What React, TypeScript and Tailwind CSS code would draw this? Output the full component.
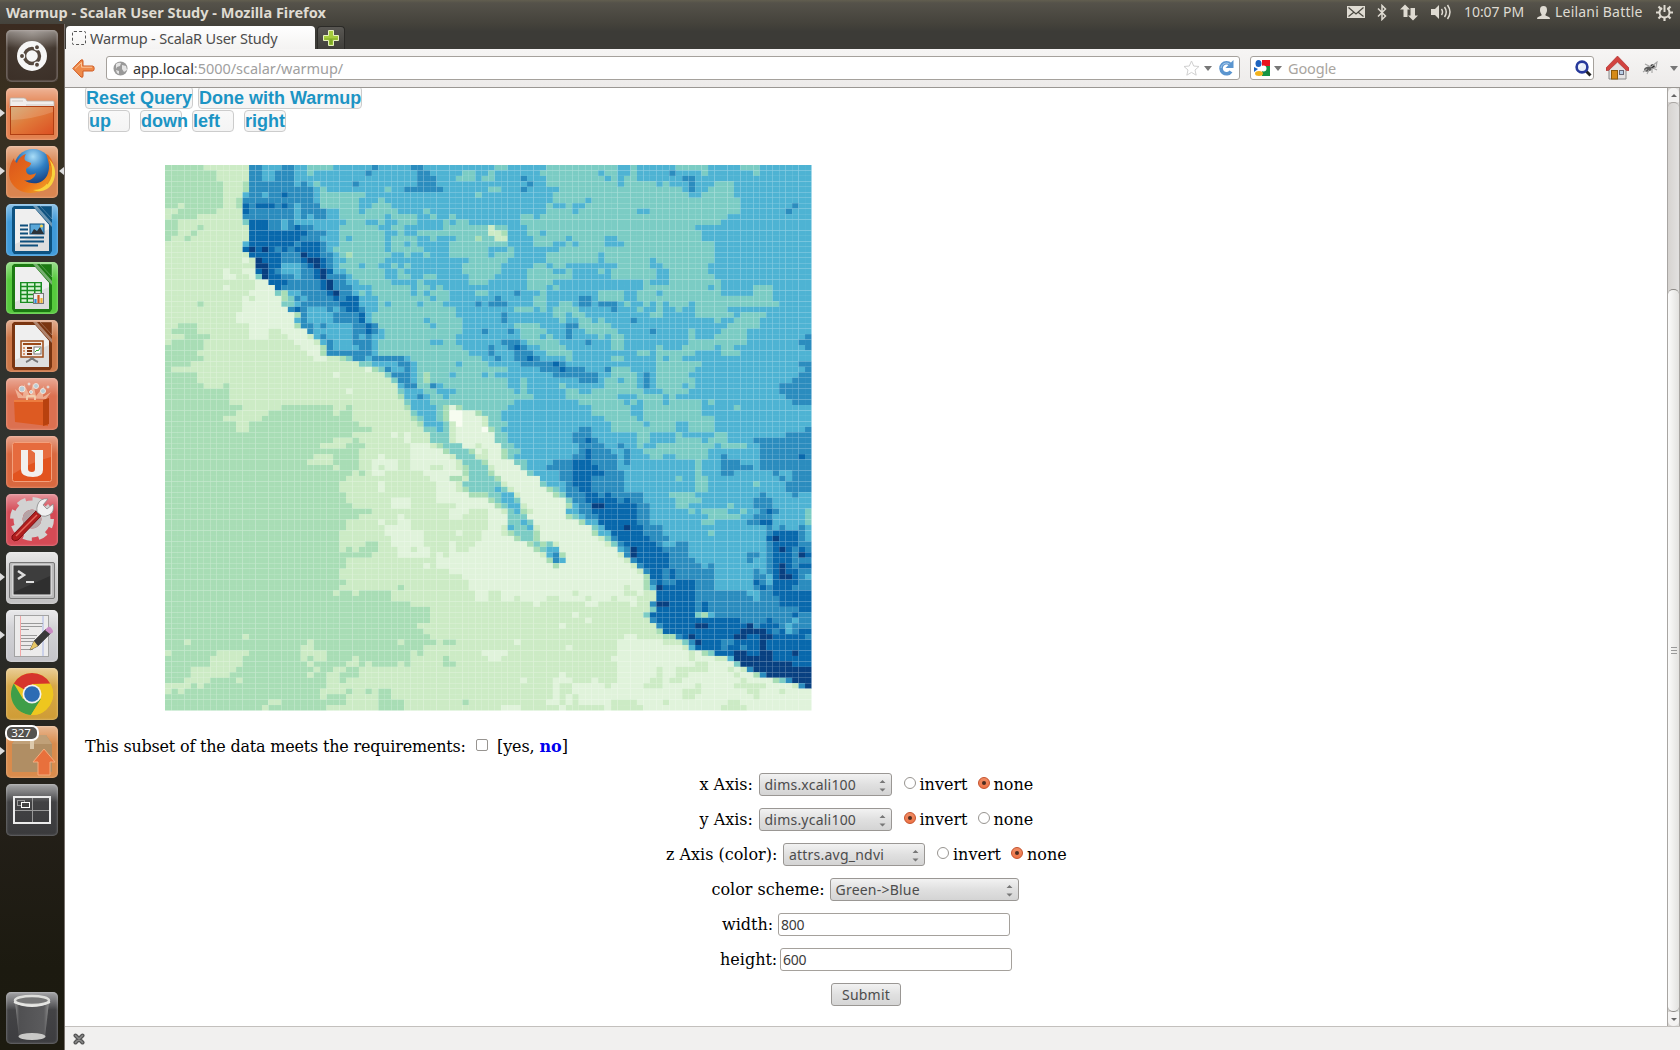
import React from "react";

const COLORS = ["#f7fcf0", "#e0f3db", "#ccebc5", "#a8ddb5", "#7bccc4", "#4eb3d3", "#2b8cbe", "#0868ac", "#084081"];

// Each token is a colour level followed by the column at which its run ends.
const ROWS = `36 213 615 518 620 522 426 532 633 538 640 551 453 559 470 572 473 579 484 589 492 5100
38 213 615 517 620 522 423 531 632 539 641 546 448 550 451 558 467 568 470 572 473 578 679 583 484 591 492 5100
38 213 615 517 620 523 539 642 545 448 549 451 555 656 559 468 569 470 571 473 580 682 5100
39 212 313 620 521 622 523 424 529 630 539 642 556 657 559 470 571 476 577 478 581 682 585 488 5100
39 212 313 623 524 425 534 435 537 643 550 452 555 656 561 480 581 682 584 488 5100
39 212 513 615 516 618 719 623 524 431 548 449 560 481 583 488 5100
39 211 312 623 524 430 533 434 560 465 566 489 5100
32 23 39 211 312 713 614 717 618 719 620 521 624 430 532 435 559 460 562 463 565 489 597 698 5100
22 38 212 713 620 521 625 527 430 531 436 540 441 559 463 564 473 575 489 596 697 5100
21 35 212 620 521 622 523 625 527 434 535 439 541 442 544 445 555 457 558 487 5100
32 212 413 716 618 519 620 528 431 533 434 536 439 543 444 545 447 555 486 5100
32 25 36 213 716 618 519 620 721 623 527 433 535 437 543 450 251 453 556 482 5100
32 24 35 213 722 625 527 434 536 437 539 450 252 353 556 458 559 483 5100
31 23 34 213 721 624 527 428 529 434 535 439 541 442 545 448 349 451 253 557 462 563 468 570 483 5100
212 513 720 621 724 625 527 434 535 437 538 439 544 453 557 460 562 463 564 468 571 485 5100
212 713 814 715 816 717 618 719 620 724 625 526 434 535 440 544 450 553 454 561 485 5100
213 718 621 822 724 626 527 428 329 435 537 438 540 441 544 450 551 454 559 467 568 485 5100
212 113 214 815 718 621 722 824 725 626 528 434 547 453 559 467 568 475 576 485 5100
214 816 718 521 622 723 824 725 626 527 430 531 433 535 436 537 438 546 452 557 459 560 462 570 475 577 484 5100
29 110 212 114 715 816 717 618 521 623 724 825 726 528 434 536 437 546 452 556 460 562 463 567 468 569 476 578 484 5100
29 111 213 114 415 816 718 620 521 623 724 825 628 529 434 536 438 540 442 547 451 556 463 569 476 578 485 5100
214 116 719 624 725 826 628 530 435 539 440 547 450 556 460 574 475 578 486 5100
29 110 214 117 718 624 725 826 629 532 438 539 441 542 443 556 459 560 461 574 484 585 486 591 494 5100
213 117 418 319 521 625 726 827 629 530 431 532 438 539 440 541 444 548 450 554 655 558 459 567 471 573 476 577 486 591 494 5100
212 113 214 118 319 420 621 522 626 727 628 730 533 441 542 444 551 652 557 459 564 666 567 471 573 494 5100
25 36 212 118 420 521 627 730 531 533 434 535 439 540 443 548 649 550 653 557 459 561 463 564 666 567 670 571 472 574 475 576 477 578 481 582 495 5100
212 119 620 721 622 525 626 527 628 730 631 533 445 554 457 558 459 560 464 569 670 573 474 576 477 579 480 582 487 5100
211 120 321 622 526 630 731 532 445 552 653 560 462 563 465 575 477 582 488 589 493 5100
211 120 521 622 526 630 731 532 440 541 446 552 653 561 462 564 466 567 468 572 673 585 486 588 492 5100
22 35 213 120 321 623 524 625 529 631 732 633 441 542 446 554 458 562 664 469 587 492 5100
21 35 213 116 218 122 623 529 631 732 633 534 446 549 650 553 654 555 459 562 663 565 470 575 676 581 482 586 490 5100
23 37 213 116 219 122 223 524 625 529 630 531 632 534 445 555 458 559 460 562 663 567 468 569 471 581 482 585 490 599 6100
21 36 220 123 224 525 626 529 632 533 441 543 445 552 655 556 461 565 666 569 471 581 490 598 6100
36 221 124 325 626 530 632 533 446 550 651 553 654 755 656 558 462 569 471 576 477 580 485 586 488 599 6100
35 222 124 325 632 533 447 550 651 554 657 559 463 573 475 576 482 586 489 5100
36 223 125 227 328 429 631 532 637 538 449 551 652 554 656 757 658 562 463 569 471 576 477 578 480 5100
34 230 432 536 638 539 445 546 450 555 660 761 662 576 483 598 6100
31 231 132 333 434 635 537 638 539 453 558 661 762 665 568 669 472 576 482 599 6100
35 226 127 234 435 638 539 440 341 444 545 449 550 451 560 667 569 473 574 675 576 481 598 6100
35 235 436 638 539 440 341 453 555 456 564 667 568 470 571 473 574 675 576 482 597 6100
36 29 310 236 537 639 441 642 543 453 555 456 561 462 568 473 574 675 576 480 581 482 595 6100
310 228 129 236 437 540 442 545 454 555 456 562 464 566 474 577 481 595 6100
310 236 337 539 640 541 443 544 457 562 470 573 477 578 479 596 6100
310 237 438 541 454 564 471 572 473 574 477 578 483 584 485 597 6100
312 218 326 228 329 237 338 542 443 344 145 346 453 566 472 574 483 588 489 5100
311 216 326 227 329 238 439 542 443 344 046 148 349 452 566 472 574 483 5100
39 215 329 238 339 440 542 443 344 046 149 250 452 568 473 574 485 5100
311 213 330 239 340 543 444 245 046 149 250 453 569 474 575 479 581 485 5100
311 213 332 240 442 543 444 245 149 050 351 452 553 564 666 569 479 581 485 599 6100
329 235 136 237 138 241 444 245 151 453 563 666 573 475 579 480 585 487 596 6100
326 229 330 237 138 241 444 245 151 453 563 665 766 667 573 475 579 483 584 487 591 6100
324 228 331 238 141 242 343 446 148 249 152 454 564 668 570 671 573 474 576 485 586 490 592 6100
330 238 143 344 447 348 149 250 152 353 455 564 665 766 669 571 672 574 484 592 6100
323 226 330 233 134 238 144 245 448 250 152 353 454 563 665 766 670 571 672 575 477 579 484 586 687 592 698 799 6100
322 226 330 232 136 238 145 246 449 350 154 456 560 663 766 670 571 672 582 483 586 689 592 6100
326 227 330 232 133 234 136 238 141 243 145 246 347 450 251 155 456 559 663 767 670 582 483 586 691 592 6100
329 230 331 232 134 240 146 347 450 351 156 457 561 663 768 671 582 483 586 688 594 695 597 6100
328 241 144 346 247 451 352 158 561 663 766 671 579 480 582 484 595 696 597 6100
327 233 134 242 145 246 344 447 452 253 158 459 562 663 766 671 582 484 591 492 596 6100
327 233 134 242 145 246 347 451 552 453 254 159 360 461 562 664 766 671 582 484 596 6100
328 242 147 350 452 554 255 160 361 462 665 767 668 769 674 578 482 592 693 597 698 5100
328 235 138 242 150 351 452 554 455 162 463 665 770 671 772 674 579 483 591 694 5100
329 235 138 245 151 352 453 555 256 162 363 564 666 868 773 675 579 481 587 488 591 694 5100
332 244 147 250 152 253 454 555 356 257 162 564 666 773 675 581 482 583 487 589 490 592 693 794 695 599 4100
330 236 137 244 146 250 153 456 162 363 464 565 667 773 675 584 489 591 694 599 4100
328 233 134 236 138 250 153 455 556 457 164 365 567 773 675 583 485 590 692 794 599 4100
328 234 138 250 152 253 554 456 557 258 166 467 568 771 872 774 677 593 694 595 696 598 699 5100
327 234 140 245 146 249 152 253 354 457 358 166 367 569 774 677 584 485 593 694 798 699 5100
327 235 140 249 154 355 457 358 167 268 469 670 775 678 593 794 895 798 699 5100
327 231 333 235 140 244 145 248 156 357 458 359 460 261 168 269 470 671 776 677 579 681 593 694 798 6100
327 228 329 230 333 236 138 239 141 244 145 247 157 358 459 561 170 571 672 873 777 681 593 694 795 896 797 698 799 6100
332 236 141 242 143 244 158 259 560 661 362 170 271 672 873 778 681 590 692 593 694 797 698 899 7100
328 242 159 360 661 562 171 272 673 778 682 590 691 593 694 797 698 6100
328 240 141 242 160 361 172 273 674 778 683 584 685 593 694 795 896 797 698 7100
327 244 173 274 675 777 678 779 685 591 692 593 694 795 896 798 6100
327 246 174 375 777 678 779 685 591 693 594 795 897 798 699 5100
328 247 174 375 676 777 679 782 685 591 792 693 594 798 6100
327 236 337 247 171 272 174 375 576 877 782 685 591 692 793 694 797 6100
326 227 329 230 335 248 150 252 163 264 171 273 174 276 782 690 592 694 7100
335 248 150 252 154 255 159 261 165 266 169 270 173 276 782 691 592 695 7100
338 257 158 265 167 272 173 275 676 878 782 683 784 695 7100
341 275 476 782 683 784 698 7100
341 263 164 274 475 782 483 384 585 697 798 6100
341 265 166 275 676 789 693 794 697 598 6100
339 261 162 276 677 782 884 790 891 692 795 696 597 6100
340 276 377 789 893 794 695 796 597 698 7100
312 213 341 271 173 277 379 680 781 882 788 890 792 894 799 6100
33 24 322 223 336 237 342 243 345 254 155 270 177 280 481 682 883 786 688 792 893 7100
321 223 340 262 163 270 180 281 582 783 786 687 789 690 792 893 7100
21 38 213 321 225 338 239 340 249 153 270 181 282 183 384 485 788 890 792 894 797 898 7100
37 212 321 222 323 225 329 230 338 243 344 250 152 269 181 282 185 287 588 894 7100
37 212 322 223 328 230 331 232 336 237 338 243 345 270 182 284 188 489 897 7100
34 211 323 224 326 228 330 270 176 277 179 284 187 288 189 290 691 8100
34 210 322 223 325 227 330 261 162 270 176 277 179 281 188 289 191 392 693 8100
33 27 311 212 325 227 328 255 156 260 163 266 167 270 175 277 178 280 189 290 194 395 496 697 8100
24 35 26 325 260 161 263 168 269 174 277 182 283 188 293 197 298 699 8100
21 32 23 324 228 329 231 332 233 335 260 161 263 180 283 190 292 195 296 1100
324 225 328 233 335 260 161 262 163 264 180 282 191 292 1100
316 218 328 233 337 246 347 259 161 262 163 264 169 273 177 278 187 289 1100
315 216 325 233 337 252 155 261 162 268 169 274 186 290 1100`
  .split("\n")
  .map((r) => r.trim().split(" "));

const CW = 6.465;
const CH = 5.455;

function HeatMap() {
  const cells: React.ReactNode[] = [];
  ROWS.forEach((runs, j) => {
    let col = 0;
    for (const t of runs) {
      const end = Number(t.slice(1));
      for (; col < end; col++) {
        cells.push(<rect key={`${j}-${col}`} x={col * CW} y={j * CH} width={CW} height={CH} fill={COLORS[Number(t[0])]} />);
      }
    }
  });
  return (
    <svg width="647" height="546" className="block">
      {cells}
    </svg>
  );
}

function Tile({ bg, children, arrow, active, badge }: { bg: string; children: React.ReactNode; arrow?: boolean; active?: boolean; badge?: string }) {
  return (
    <div className="relative flex h-[52px] w-full shrink-0 items-center pl-[6px]">
      {arrow && <span className="absolute left-0 top-[21px] h-0 w-0 border-y-[4.5px] border-l-[5px] border-y-transparent border-l-[#dcdcdc]" />}
      {active && <span className="absolute right-0 top-[21px] h-0 w-0 border-y-[4.5px] border-r-[5px] border-y-transparent border-r-[#dcdcdc]" />}
      <div className={`relative h-[52px] w-[52px] overflow-hidden rounded-[5px] shadow-[inset_0_0_2px_1px_rgba(255,255,255,0.22)] ${bg}`}>
        <div className="absolute inset-x-0 top-0 h-[18px] bg-gradient-to-b from-white/40 to-transparent" />
        <svg width="52" height="52" viewBox="0 0 52 52" className="relative block">
          {children}
        </svg>
      </div>
      {badge && (
        <span className="absolute left-[5px] top-[-1px] flex h-[16px] w-[34px] items-center justify-center rounded-[7px] border-2 border-white bg-[#55534f] pr-[2px] font-['Noto_Sans'] text-[11.5px] leading-none text-white">
          {badge}
        </span>
      )}
    </div>
  );
}

function Doc({ dark, children }: { dark: string; children: React.ReactNode }) {
  return (
    <>
      <path d="M8 2h31l7 8v37l-2 3H8l-2-3V4z" fill={dark} />
      <path d="M9 5h20l14 16v26H9z" fill="#dedede" />
      <path d="M9 5h20l14 16v4L9 40z" fill="#efefef" />
      <path d="M27 2l19 21v-4L31 2z" fill="#fff" opacity=".4" />
      <path d="M34 2h12v13z" fill={dark} stroke="#fff" strokeOpacity=".25" />
      {children}
    </>
  );
}

function Launcher() {
  return (
    <div className="flex h-full w-[65px] shrink-0 flex-col gap-[6px] border-r border-[#77706c] bg-[linear-gradient(#3b2b20,#38301f_8%,#33302a_22%,#30332f_42%,#2a2a25_62%,#231f18_78%,#1c1a10_92%,#1d1b10)] pb-[6px] pt-[6px]">
      <Tile bg="bg-[radial-gradient(circle_at_50%_5%,#6d635b,#41362e_50%,#3b2f27)]">
        <circle cx="26" cy="26" r="15" fill="#f6f6f6" />
        <circle cx="26" cy="26" r="7.500" fill="none" stroke="#55483f" strokeWidth="3.400" />
        <g stroke="#f6f6f6" strokeWidth="1.300" fill="#55483f">
          <circle cx="16" cy="26" r="2.600" />
          <circle cx="31" cy="17.300" r="2.600" />
          <circle cx="31" cy="34.700" r="2.600" />
        </g>
        <rect x="1" y="1" width="50" height="50" rx="5" fill="none" stroke="#9c918a" strokeOpacity=".45" />
      </Tile>
      <Tile bg="bg-[#e3814f]" arrow>
        <defs>
          <linearGradient id="fold" x1="0" y1="0" x2="1" y2="1">
            <stop offset="0" stopColor="#cfa26a" />
            <stop offset=".45" stopColor="#e07a3a" />
            <stop offset="1" stopColor="#dc4f22" />
          </linearGradient>
        </defs>
        <path d="M4 20V11q0-1 1-1h13q2 0 3 3h26q1 0 1 1v6z" fill="#f1eeec" stroke="#b5afa9" strokeWidth=".8" />
        <path d="M6 13h11M20 17h27" stroke="#cfc9c4" />
        <rect x="4.500" y="18.500" width="43" height="28" fill="url(#fold)" stroke="#b03f12" />
        <path d="M5 32Q28 31 47 24V19H5z" fill="#fff" opacity=".15" />
      </Tile>
      <Tile bg="bg-[#d98550]" arrow active>
        <defs>
          <radialGradient id="globe" cx=".5" cy=".2" r=".8">
            <stop offset="0" stopColor="#a9ddf7" />
            <stop offset=".45" stopColor="#2f7fc4" />
            <stop offset="1" stopColor="#12306f" />
          </radialGradient>
          <linearGradient id="fox" x1="0" y1="0" x2="1" y2="1">
            <stop offset="0" stopColor="#d9541c" />
            <stop offset=".6" stopColor="#e9701b" />
            <stop offset="1" stopColor="#f6b42a" />
          </linearGradient>
        </defs>
        <circle cx="27" cy="22" r="19" fill="url(#globe)" />
        <path d="M42 9c9 9 8 25-1 32C31 50 12 49 5 36 1 28 4 17 8 12c0 3 2 4 3 5 1-4 5-8 9-9-2 3-2 6 0 7l5 2c0 4-5 4-5 7 0 5 5 6 10 3-1 5-7 9-12 7 8 6 21 4 24-7 2-6 1-11-2-19z" fill="url(#fox)" />
        <path d="M43 13c4 8 4 16 0 22-4 6-9 9-16 9 8 3 15 0 19-6 5-9 4-18-3-25z" fill="#f9d23c" />
        <path d="M44 20c2 6 1 13-3 18" fill="none" stroke="#e98c1e" strokeWidth="1.500" />
      </Tile>
      <Tile bg="bg-[#3f9ad9]">
        <Doc dark="#0d5280">
          <path d="M14 21.500h8M14 25.500h8M14 29.500h8M14 33.500h24M14 37.500h24M14 41.500h18" stroke="#0e4f7c" strokeWidth="1.800" />
          <rect x="24" y="20" width="14" height="10" fill="#5aa7d8" stroke="#0e4f7c" />
          <path d="M25 30l3-5 3 2 3-4 4 7z" fill="#2b3238" />
          <circle cx="35.500" cy="22" r="1.500" fill="#f7d452" />
        </Doc>
      </Tile>
      <Tile bg="bg-[#56ca3d]">
        <Doc dark="#1c7a12">
          <path d="M14 20h22v21H14z" fill="#1a8c22" />
          <path d="M15.500 22.500h5M22 22.500h6M29.500 22.500h5M15.500 26.500h5M22 26.500h6M29.500 26.500h5M15.500 30.500h5M22 30.500h6M29.500 30.500h5M15.500 34.500h5M22 34.500h6M15.500 38.500h5M22 38.500h5" stroke="#d9f3d6" strokeWidth="2.600" />
          <rect x="27.500" y="31.500" width="10" height="10" fill="#eee" stroke="#777" />
          <path d="M29.500 41v-4" stroke="#2a8cd8" strokeWidth="2.200" />
          <path d="M32.500 41v-8" stroke="#c7571c" strokeWidth="2.200" />
          <path d="M35.500 41v-5" stroke="#eab234" strokeWidth="2.200" />
        </Doc>
      </Tile>
      <Tile bg="bg-[#cd7747]">
        <Doc dark="#7a3511">
          <rect x="15" y="21" width="22" height="16" fill="#f4ece6" stroke="#9b4a18" strokeWidth="1.500" />
          <path d="M17 24h18" stroke="#9b4a18" strokeWidth="1.800" />
          <path d="M17 28h2M17 31h2M17 34h2" stroke="#d79770" strokeWidth="2" />
          <path d="M21 28h5M21 31h5M21 34h5" stroke="#7a3511" strokeWidth="2" />
          <rect x="28" y="27" width="7" height="7" fill="#fff" stroke="#777" />
          <path d="M29 32l2-2 1 1 2-3" stroke="#2c9a2c" fill="none" />
          <path d="M20 42q3-1 6-4 3 3 6 4" stroke="#777" fill="none" strokeWidth="2" />
        </Doc>
      </Tile>
      <Tile bg="bg-[#dc7050]">
        <path d="M12 20l-3-9 8 7 1-12 6 12 3-13 3 13 8-10-1 11 8-5-5 7z" fill="#ffe7cf" opacity=".5" />
        <g fill="#b9cdd6" stroke="#efe3dc" strokeWidth="1">
          <circle cx="16" cy="11" r="3" />
          <circle cx="30" cy="8" r="2.500" />
          <circle cx="37" cy="13" r="2.500" />
          <circle cx="25" cy="14" r="1.500" />
          <circle cx="23" cy="6" r="1" />
          <circle cx="42" cy="9" r="1" />
        </g>
        <path d="M8 22h34v26L9 44z" fill="#dd5a22" />
        <path d="M37 22l6-2v26l-6 2z" fill="#b8410f" />
        <path d="M8 22h29v2H8z" fill="#ec7d40" />
        <path d="M21 22v-3q0-1 1-1h6q1 0 1 1v3" fill="none" stroke="#f2cfae" strokeWidth="1.800" />
      </Tile>
      <Tile bg="bg-[#d9683f]">
        <rect x="6.500" y="6.500" width="39" height="39" rx="2" fill="#e2531f" stroke="#f3a07c" />
        <path d="M7 7h38v14Q25 26 7 38z" fill="#fff" opacity=".14" />
        <path d="M15 14h7v19q0 3 4 3 3 0 3-3V17l-4-3h12v20q0 7-10 7-12 0-12-7z" fill="#f2efed" />
      </Tile>
      <Tile bg="bg-[#d44a55]">
        <circle cx="26" cy="25" r="14" fill="none" stroke="#d2d2d2" strokeWidth="9" />
        <circle cx="26" cy="25" r="19.500" fill="none" stroke="#d2d2d2" strokeWidth="5" strokeDasharray="8.500 6.810" />
        <circle cx="26" cy="25" r="9.500" fill="#b5a3a5" />
        <path d="M6 42L30 17l5 5L12 46q-4 2-6-1z" fill="#b01d1d" stroke="#7a0f10" />
        <path d="M10 42L31 21" stroke="#e46a5e" strokeWidth="1.500" />
        <path d="M31 18q-1-8 4-12 4-2 7-1l-5 6 4 4 6-5q2 8-4 11-4 2-7 1z" fill="#f0f0f0" stroke="#888" strokeWidth=".8" />
      </Tile>
      <Tile bg="bg-[linear-gradient(#d9d9d9,#c2c2c2)]" arrow>
        <rect x="3.500" y="10.500" width="45" height="36" rx="1.500" fill="#bcbcbc" stroke="#777" />
        <rect x="7" y="13" width="38" height="30" fill="#2f2f2f" stroke="#eee" />
        <path d="M8 14h36v10L8 40z" fill="#fff" opacity=".07" />
        <path d="M12 19l6 4-6 4" fill="none" stroke="#ddd" strokeWidth="2.500" />
        <path d="M20 30h8" stroke="#ddd" strokeWidth="2" />
      </Tile>
      <Tile bg="bg-[linear-gradient(#dadadd,#c4c4c9)]" arrow>
        <rect x="8.500" y="5.500" width="34" height="41" fill="#ecebeb" stroke="#a2a2a2" />
        <path d="M14.500 6v40" stroke="#f2a7a7" />
        <path d="M37 6v40" stroke="#a9b6e6" />
        <path d="M15 13.500h22M15 16.500h21M15 19.500h8M15 25.500h16M15 28.500h14M15 31.500h12M15 35.500h10M15 39.500h12" stroke="#9a9a9a" strokeWidth="1" />
        <path d="M24 40l4-9L40 19l5 4-13 13z" fill="#3a3a3a" stroke="#222" strokeWidth=".5" />
        <path d="M24 40l4-9 4 5z" fill="#e7c665" />
        <path d="M39 20l3-3q2-1 4 2t0 4l-2 1z" fill="#c98bc4" />
      </Tile>
      <Tile bg="bg-[linear-gradient(#dcae52,#cf9c35)]">
        <circle cx="26" cy="26" r="21" fill="#eec61f" />
        <path d="M26 26L7.800 15.500A21 21 0 0 1 44.200 15.500L26 16z" fill="#d6352c" />
        <path d="M7.800 15.500A21 21 0 0 0 25 47L35 31 26 26 17 31z" fill="#3f9e48" />
        <path d="M44.600 16H26L35 31 25 47A21 21 0 0 0 44.600 16z" fill="#eec61f" />
        <circle cx="26" cy="26" r="9.500" fill="#f2f2f2" />
        <circle cx="26" cy="26" r="7.800" fill="#2d6cb4" />
      </Tile>
      <Tile bg="bg-[#d98b4c]" arrow badge="327">
        <path d="M6 18l6-9h28l6 9v27q0 1-1 1H7q-1 0-1-1z" fill="#b08e64" />
        <path d="M6 18l6-9h28l6 9z" fill="#c0a078" />
        <path d="M24 9h4v14h-4z" fill="#dcc9ab" />
        <path d="M32 49V36h-5l11-13 11 13h-5v13z" fill="#e8703c" stroke="#f6ab7c" />
      </Tile>
      <Tile bg="bg-[linear-gradient(#6a6a6c,#424244_35%,#3a3a3c)]">
        <rect x="8" y="13" width="36" height="26" fill="none" stroke="#ececec" strokeWidth="2" />
        <path d="M26.500 14v24M9 26.500h34" stroke="#999" />
        <rect x="11.500" y="16.500" width="7" height="5" fill="none" stroke="#999" />
        <rect x="15.500" y="18.500" width="8" height="5" fill="#444" stroke="#fff" />
      </Tile>
      <div className="flex-1" />
      <Tile bg="bg-[linear-gradient(#66666a,#434345_35%,#3d3d40)]">
        <defs>
          <linearGradient id="bin">
            <stop offset="0" stopColor="#8d8d8d" />
            <stop offset=".12" stopColor="#505052" />
            <stop offset=".85" stopColor="#5b5b5d" />
            <stop offset="1" stopColor="#8d8d8d" />
          </linearGradient>
        </defs>
        <path d="M9 10l4 35q13 5 26 0l4-35z" fill="url(#bin)" />
        <ellipse cx="26" cy="44.500" rx="13.500" ry="3.500" fill="#c9c9c7" />
        <ellipse cx="26" cy="8.500" rx="17" ry="4.500" fill="#777" stroke="#dededb" strokeWidth="2.500" />
        <path d="M8 10q18 8 36 0" fill="none" stroke="#e6e6e3" strokeWidth="2" />
      </Tile>
    </div>
  );
}

function Caret() {
  return <span className="h-0 w-0 border-x-[4px] border-t-[5px] border-x-transparent border-t-[#777]" />;
}

function TopPanel() {
  return (
    <div className="flex h-[24px] shrink-0 items-center bg-[linear-gradient(#625e4f,#55524a_12%,#44423b)] pl-[6px] font-['Noto_Sans'] text-[#dfdbd2]">
      <span className="w-[330px] whitespace-nowrap text-[14.500px] font-bold leading-none">Warmup - ScalaR User Study - Mozilla Firefox</span>
      <div className="flex-1" />
      <svg width="18" height="12" viewBox="0 0 18 12" className="mr-[12px]">
        <rect width="18" height="12" fill="#dfdbd2" />
        <path d="M1.500 1.500L9 8l7.500-6.500M1.500 10.500l5-4M16.500 10.500l-5-4" fill="none" stroke="#4a4840" strokeWidth="1.200" />
      </svg>
      <svg width="10" height="17" viewBox="0 0 10 17" className="mr-[13px]">
        <path d="M1 4.500l7.500 7.500L5 15.500v-14L8.500 5 1 12.500" fill="none" stroke="#dfdbd2" strokeWidth="1.500" />
      </svg>
      <svg width="18" height="17" viewBox="0 0 18 17" className="mr-[13px]">
        <path d="M5 .5l5 5H7.500V13h-4V5.500H0z" fill="#dfdbd2" />
        <path d="M13 16.500l-5-5h2.500V4h4.500v7.500h3z" fill="#dfdbd2" />
      </svg>
      <svg width="21" height="18" viewBox="0 0 21 18" className="mr-[12px]">
        <path d="M0 6h4l4-4v14l-4-4H0z" fill="#dfdbd2" />
        <path d="M10.500 6q2 3 0 6M13.500 4q3.500 5 0 10M16.500 2q5 7 0 14" fill="none" stroke="#dfdbd2" strokeWidth="1.500" />
      </svg>
      <span className="w-[73px] whitespace-nowrap text-[14px] leading-none tracking-[-0.05px]">10:07 PM</span>
      <svg width="13" height="13" viewBox="0 0 13 13" className="mr-[5px]">
        <path d="M6.500 0C9 0 10 1.500 10 4c0 2-.8 3.500-1.500 4.300V9.500L12 11q1 .5 1 2H0q0-1.500 1-2l3.500-1.500V8.300C3.800 7.500 3 6 3 4 3 1.500 4 0 6.500 0z" fill="#dfdbd2" />
      </svg>
      <span className="w-[101px] whitespace-nowrap text-[14px] leading-none tracking-[0.2px]">Leilani Battle</span>
      <svg width="17" height="17" viewBox="0 0 17 17" className="mr-[7px]">
        <circle cx="8.500" cy="8.500" r="5" fill="none" stroke="#dfdbd2" strokeWidth="1.900" strokeDasharray="26.200 5.216" strokeDashoffset="-10.500" transform="rotate(180 8.500 8.500)" />
        <path d="M8.500 1v7" stroke="#dfdbd2" strokeWidth="2" />
        <path d="M13.500 8.500H17M3.500 8.500H0M8.500 13.500V17M12 12l2.500 2.500M5 12l-2.500 2.500M12 5l2.500-2.500M5 5L2.500 2.500" stroke="#dfdbd2" strokeWidth="2.200" />
      </svg>
    </div>
  );
}

function TabBar() {
  return (
    <div className="flex h-[25px] shrink-0 items-end bg-[linear-gradient(#44423b,#3c3b37_30%)] pl-[1px]">
      <div className="flex h-[23px] w-[249px] items-center rounded-t-[4px] bg-gradient-to-b from-white to-[#f4f3f2] pl-[6px] pt-px">
        <span className="mr-[4px] h-[14px] w-[14px] rounded-[2px] border border-dashed border-[#555]" />
        <span className="whitespace-nowrap font-['Noto_Sans'] text-[14.500px] leading-none tracking-[-0.2px] text-[#4c4c4c]">Warmup - ScalaR User Study</span>
      </div>
      <div className="ml-[2px] flex h-[23px] w-[28px] items-center justify-center rounded-t-[4px] border border-b-0 border-[#2b2a27] bg-gradient-to-b from-[#5a5854] to-[#403f3b]">
        <svg width="16" height="16" viewBox="0 0 16 16">
          <path d="M5.500.5h5v5h5v5h-5v5h-5v-5h-5v-5h5z" fill="#a6cc3d" stroke="#e7f3bd" />
          <path d="M6.500 8.500h-5v1h5v5h3v-5h5v-1z" fill="#6f9d1c" opacity=".7" />
        </svg>
      </div>
    </div>
  );
}

function Toolbar() {
  return (
    <div className="flex h-[39px] shrink-0 items-center border-b border-[#9a9793] bg-gradient-to-b from-[#f6f5f4] to-[#edebea] pl-[7px] font-['Noto_Sans']">
      <svg width="23" height="19" viewBox="0 0 23 19" className="mr-[11px]">
        <path d="M.8 9.500L9 1q2-1 2 1v5h9.500q1.700 0 1.700 2.500t-1.700 2.500H11v5q0 2-2 1z" fill="#ee8a4a" stroke="#cf5a22" />
        <path d="M3 9.500L9.500 3.500V8.200H20" fill="none" stroke="#fbc697" />
      </svg>
      <div className="flex h-[24px] w-[1134px] shrink-0 items-center rounded-[3px] border border-[#a5a19c] bg-white pl-[6px]">
        <svg width="15" height="15" viewBox="0 0 15 15" className="mr-[5px]">
          <circle cx="7.500" cy="7.500" r="7" fill="#999" />
          <path d="M3 3q3-2 5-1l-1 3-3 1-1 2zM9 4l4 1 1 4-3 2-2-3zM3 9l3 1v3l-2-1z" fill="#e4e4e4" />
        </svg>
        <span className="whitespace-nowrap text-[14.500px] leading-none tracking-[-0.04px] text-[#a0a0a0]">
          <span className="text-[#333]">app.local</span>:5000/scalar/warmup/
        </span>
        <div className="flex-1" />
        <svg width="17" height="16" viewBox="0 0 17 16" className="mr-[4px]">
          <path d="M8.500 1l2.200 5 5.300.5-4 3.500 1.200 5.200-4.700-2.800-4.700 2.800L5 10 1 6.500 6.300 6z" fill="#fff" stroke="#d0d0d0" />
        </svg>
        <Caret />
        <svg width="16" height="16" viewBox="0 0 16 16" className="ml-[6px] mr-[5px]">
          <path d="M12.500 4.500A5.500 5.500 0 1 0 13 11.500" fill="none" stroke="#5b95cf" strokeWidth="3.600" />
          <path d="M15.500 0v8h-8z" fill="#5b95cf" />
          <path d="M11.500 4A5.500 5.500 0 0 0 3 8" fill="none" stroke="#a9cdee" strokeWidth="1" />
        </svg>
      </div>
      <div className="ml-[10px] flex h-[24px] w-[344px] shrink-0 items-center rounded-[3px] border border-[#a5a19c] bg-white pl-[3px]">
        <svg width="16" height="16" viewBox="0 0 16 16" className="mr-[4px]">
          <path d="M8 0h8v6H8z" fill="#e8121c" />
          <path d="M8 6h8v10H8z" fill="#169544" />
          <ellipse cx="4.500" cy="3.500" rx="3" ry="3.500" fill="#1c63bf" />
          <path d="M0 7l4 2-4 3z" fill="#1c63bf" />
          <circle cx="9.500" cy="8.500" r="3" fill="#fff" />
          <ellipse cx="5" cy="13.500" rx="4" ry="2.500" fill="#f2b21b" />
        </svg>
        <Caret />
        <span className="ml-[6px] whitespace-nowrap text-[14.500px] leading-none tracking-[-0.15px] text-[#a9a5a0]">Google</span>
        <div className="flex-1" />
        <svg width="17" height="17" viewBox="0 0 17 17" className="mr-[1px]">
          <path d="M11 11l4.500 4.500" stroke="#222" strokeWidth="3" />
          <circle cx="7" cy="7" r="5.400" fill="#e8eef8" stroke="#27399b" strokeWidth="2.600" />
          <path d="M4.500 7a2.500 2.500 0 0 1 2.500-2.500" stroke="#fff" fill="none" />
        </svg>
      </div>
      <svg width="23" height="24" viewBox="0 0 23 24" className="ml-[12px]">
        <path d="M3 11v12h17V11l-8.500-8z" fill="#e4e2e2" stroke="#888" />
        <path d="M0 12L11.500 0 23 12v2.500h-2.500L11.500 6 2.500 14.500H0z" fill="#d2433f" stroke="#a52a2a" strokeWidth=".6" />
        <rect x="5.500" y="14.500" width="6" height="8.500" fill="#d58a17" stroke="#8c5a0a" />
        <rect x="13.500" y="14.500" width="4" height="4" fill="#b9cfe6" stroke="#667" />
      </svg>
      <svg width="17" height="14" viewBox="0 0 17 14" className="ml-[13px]">
        <ellipse cx="6" cy="8" rx="4" ry="2.500" fill="#5b5b5b" transform="rotate(-20 6 8)" />
        <circle cx="10.500" cy="5.500" r="2.200" fill="#222" />
        <path d="M3 3l6 3 6-5-1 5-5 2M1 11l4-3M5 13l2-4M10 12l0-4M15 9l-4-2" fill="none" stroke="#a5a5a5" strokeWidth="1.100" />
      </svg>
      <span className="ml-[11px] flex">
        <Caret />
      </span>
    </div>
  );
}

function LinkButton({ w, children }: { w: string; children: React.ReactNode }) {
  return (
    <span className={`flex items-center whitespace-nowrap rounded-[4px] border border-[#ccc] bg-gradient-to-b from-[#f9f9f9] to-[#f4f4f4] font-['Liberation_Sans'] text-[18px] font-bold leading-none text-[#1c94c4] ${w}`}>
      {children}
    </span>
  );
}

function Radio({ on }: { on?: boolean }) {
  return (
    <span className={`mt-[-4px] flex h-[12px] w-[12px] shrink-0 items-center justify-center rounded-full border ${on ? "border-[#c4502a] bg-gradient-to-b from-[#f08c64] to-[#ee7446]" : "border-[#979490] bg-white"}`}>
      {on && <span className="h-[4px] w-[4px] rounded-full bg-[#4b2c20]" />}
    </span>
  );
}

function Select({ w, children }: { w: string; children: React.ReactNode }) {
  return (
    <span className={`flex h-[23px] shrink-0 items-center justify-between rounded-[3px] border border-[#9a9794] bg-gradient-to-b from-[#f2f2f2] via-[#e0e0e0] to-[#d4d4d4] pl-[5px] pr-[5px] font-['Noto_Sans'] text-[14px] leading-none tracking-[0.22px] text-[#4c4c4c] ${w}`}>
      <span className="whitespace-nowrap">{children}</span>
      <svg width="7" height="13" viewBox="0 0 7 13" className="mt-[2px]">
        <path d="M3.500 1l3 3h-6zM3.500 12.500l3-3h-6z" fill="#777" />
      </svg>
    </span>
  );
}

function AxisRow({ label, lw, sw, value, invert }: { label: string; lw: string; sw: string; value: string; invert?: boolean }) {
  return (
    <div className="flex h-[23px] items-center justify-center">
      <span className={`shrink-0 whitespace-nowrap ${lw}`}>{label}</span>
      <Select w={sw}>{value}</Select>
      <span className="w-[12px]" />
      <Radio on={invert} />
      <span className="ml-[4px] w-[58px] whitespace-nowrap">invert</span>
      <Radio on={!invert} />
      <span className="ml-[4px] w-[39px] whitespace-nowrap">none</span>
    </div>
  );
}

function Field({ label, lw, value }: { label: string; lw: string; value: string }) {
  return (
    <div className="flex h-[23px] items-center justify-center">
      <span className={`shrink-0 whitespace-nowrap ${lw}`}>{label}</span>
      <span className="flex h-[23px] w-[232px] items-center rounded-[3px] border border-[#a5a19c] bg-white pl-[2px] font-['Noto_Sans'] text-[14px] leading-none tracking-[-0.2px] text-[#3c3c3c]">{value}</span>
    </div>
  );
}

function Page() {
  return (
    <div className="min-w-0 flex-1 overflow-hidden bg-white font-['DejaVu_Serif'] text-[16px] leading-none text-black">
      <div className="ml-[20px] mt-[-2px] flex h-[23px] gap-[5px]">
        <LinkButton w="w-[108px]">Reset Query</LinkButton>
        <LinkButton w="w-[164px]">Done with Warmup</LinkButton>
      </div>
      <div className="ml-[23px] mt-px flex h-[22px] gap-[10px]">
        <LinkButton w="w-[42px]">up</LinkButton>
        <LinkButton w="w-[42px]">down</LinkButton>
        <LinkButton w="w-[42px]">left</LinkButton>
        <LinkButton w="w-[42px]">right</LinkButton>
      </div>
      <div className="ml-[100px] mt-[33px]">
        <HeatMap />
      </div>
      <div className="ml-[20px] mt-[26px] flex h-[20px] items-center">
        <span className="w-[391px] whitespace-nowrap tracking-[-0.2px]">This subset of the data meets the requirements:</span>
        <span className="mt-[-5px] h-[12px] w-[12px] rounded-[2px] border border-[#979490] bg-white" />
        <span className="ml-[9px] whitespace-nowrap tracking-[-0.1px]">
          [yes, <b className="text-[#0000ee]">no</b>]
        </span>
      </div>
      <div className="mt-[16px] flex flex-col gap-[12px]">
        <AxisRow label="x Axis:" lw="w-[59px]" sw="w-[133px]" value="dims.xcali100" />
        <AxisRow label="y Axis:" lw="w-[59px]" sw="w-[133px]" value="dims.ycali100" invert />
        <AxisRow label="z Axis (color):" lw="w-[117px]" sw="w-[142px]" value="attrs.avg_ndvi" />
        <div className="flex h-[23px] items-center justify-center pr-[2px]">
          <span className="w-[118px] whitespace-nowrap">color scheme:</span>
          <Select w="w-[189px]">{"Green->Blue"}</Select>
        </div>
        <Field label="width:" lw="w-[56px]" value="800" />
        <Field label="height:" lw="w-[60px]" value="600" />
        <div className="flex justify-center">
          <span className="flex h-[23px] w-[70px] items-center justify-center rounded-[3px] border border-[#9a9794] bg-gradient-to-b from-[#f2f2f2] via-[#e0e0e0] to-[#d6d6d6] font-['Noto_Sans'] text-[14px] tracking-[0.2px] text-[#4c4c4c]">Submit</span>
        </div>
      </div>
    </div>
  );
}

function Scrollbar() {
  return (
    <div className="flex w-[13px] shrink-0 flex-col border-x border-[#a8a5a2] bg-gradient-to-r from-[#d6d3d0] to-[#e2e1e0]">
      <div className="flex h-[14px] items-center justify-center rounded-t-[5px] bg-[#f4f3f2]">
        <span className="h-0 w-0 border-x-[3px] border-b-[3px] border-x-transparent border-b-[#666]" />
      </div>
      <div className="h-[187px] rounded-t-[5px] border-t border-[#a8a5a2]" />
      <div className="flex flex-1 flex-col items-center justify-center gap-[2px] rounded-[5px] border-y border-[#8d8a87] bg-gradient-to-r from-[#fbfbfa] to-[#e3e2e0]">
        <span className="h-px w-[6px] bg-[#999]" />
        <span className="h-px w-[6px] bg-[#999]" />
        <span className="h-px w-[6px] bg-[#999]" />
      </div>
      <div className="flex h-[14px] items-center justify-center rounded-b-[5px] bg-[#f4f3f2]">
        <span className="h-0 w-0 border-x-[3px] border-t-[3px] border-x-transparent border-t-[#666]" />
      </div>
    </div>
  );
}

export default function App() {
  return (
    <div className="flex h-[1050px] w-[1680px] flex-col overflow-hidden bg-[#3c3b37]">
      <TopPanel />
      <div className="flex h-[1026px]">
        <Launcher />
        <div className="flex min-w-0 flex-1 flex-col">
          <TabBar />
          <Toolbar />
          <div className="flex h-[938px]">
            <Page />
            <Scrollbar />
          </div>
          <div className="flex h-[24px] items-center border-t border-[#c3c0bd] bg-[#f1f0ef] pl-[8px]">
            <svg width="12" height="12" viewBox="0 0 12 12">
              <path d="M2.500 2.500l7 7M9.500 2.500l-7 7" stroke="#555" strokeWidth="4" strokeLinecap="round" />
              <path d="M2.500 2.500l7 7M9.500 2.500l-7 7" stroke="#8a8a8a" strokeWidth="1.500" strokeLinecap="round" />
            </svg>
          </div>
        </div>
      </div>
    </div>
  );
}
